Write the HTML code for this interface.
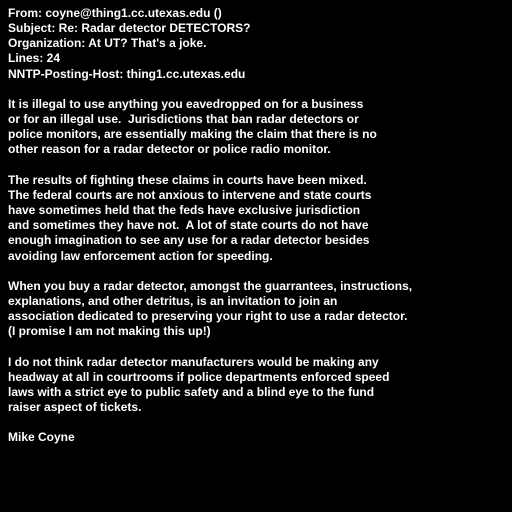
<html><head><style>
body{margin:0;background:#000;width:512px;height:512px;overflow:hidden}
pre{margin:0;padding:6px 0 0 8px;color:#fff;font:bold 12px/15.15px "Liberation Sans",sans-serif;white-space:pre}
</style></head><body><pre>From: coyne@thing1.cc.utexas.edu ()
Subject: Re: Radar detector DETECTORS?
Organization: At UT? That's a joke.
Lines: 24
NNTP-Posting-Host: thing1.cc.utexas.edu

It is illegal to use anything you eavedropped on for a business
or for an illegal use.  Jurisdictions that ban radar detectors or
police monitors, are essentially making the claim that there is no
other reason for a radar detector or police radio monitor.

The results of fighting these claims in courts have been mixed.
The federal courts are not anxious to intervene and state courts
have sometimes held that the feds have exclusive jurisdiction
and sometimes they have not.  A lot of state courts do not have
enough imagination to see any use for a radar detector besides
avoiding law enforcement action for speeding.

When you buy a radar detector, amongst the guarrantees, instructions,
explanations, and other detritus, is an invitation to join an
association dedicated to preserving your right to use a radar detector.
(I promise I am not making this up!)

I do not think radar detector manufacturers would be making any
headway at all in courtrooms if police departments enforced speed
laws with a strict eye to public safety and a blind eye to the fund
raiser aspect of tickets.

Mike Coyne</pre></body></html>
